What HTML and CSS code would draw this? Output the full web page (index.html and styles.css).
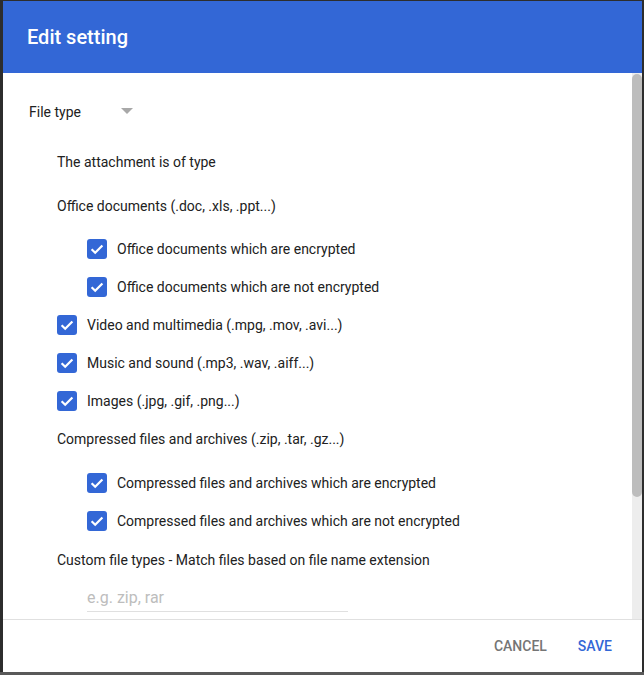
FILE: index.html
```html
<!DOCTYPE html>
<html>
<head>
<meta charset="utf-8">
<link rel="stylesheet" href="styles.css">
</head>
<body>
<div class="dialog">
  <header class="dlg-header"><h1 class="dlg-title">Edit setting</h1></header>
  <div class="dlg-body">
  <div class="dlg-content">
    <div class="select-row">
      <span class="select-label">File type</span>
      <span class="select-arrow"></span>
    </div>
    <div class="block">
      <div class="heading h-first">The attachment is of type</div>
      <div class="heading h-office">Office documents (.doc, .xls, .ppt...)</div>
      <div class="group">
        <label class="cb-row nested"><span class="cb"><svg viewBox="0 0 20 20"><path d="M4.6 10.2l3.6 3.6 7.2-7.4"/></svg></span><span class="cb-text">Office documents which are encrypted</span></label>
        <label class="cb-row nested"><span class="cb"><svg viewBox="0 0 20 20"><path d="M4.6 10.2l3.6 3.6 7.2-7.4"/></svg></span><span class="cb-text">Office documents which are not encrypted</span></label>
        <label class="cb-row"><span class="cb"><svg viewBox="0 0 20 20"><path d="M4.6 10.2l3.6 3.6 7.2-7.4"/></svg></span><span class="cb-text">Video and multimedia (.mpg, .mov, .avi...)</span></label>
        <label class="cb-row"><span class="cb"><svg viewBox="0 0 20 20"><path d="M4.6 10.2l3.6 3.6 7.2-7.4"/></svg></span><span class="cb-text">Music and sound (.mp3, .wav, .aiff...)</span></label>
        <label class="cb-row"><span class="cb"><svg viewBox="0 0 20 20"><path d="M4.6 10.2l3.6 3.6 7.2-7.4"/></svg></span><span class="cb-text">Images (.jpg, .gif, .png...)</span></label>
      </div>
      <div class="heading h-comp">Compressed files and archives (.zip, .tar, .gz...)</div>
      <div class="group">
        <label class="cb-row nested"><span class="cb"><svg viewBox="0 0 20 20"><path d="M4.6 10.2l3.6 3.6 7.2-7.4"/></svg></span><span class="cb-text">Compressed files and archives which are encrypted</span></label>
        <label class="cb-row nested"><span class="cb"><svg viewBox="0 0 20 20"><path d="M4.6 10.2l3.6 3.6 7.2-7.4"/></svg></span><span class="cb-text">Compressed files and archives which are not encrypted</span></label>
      </div>
      <div class="heading h-custom">Custom file types - Match files based on file name extension</div>
      <div class="input-wrap"><input class="text-input" type="text" placeholder="e.g. zip, rar"></div>
    </div>
  </div>
  <div class="scrollbar"><div class="scroll-thumb"></div></div>
  </div>
  <footer class="dlg-footer">
    <button class="btn btn-cancel">CANCEL</button>
    <button class="btn btn-save">SAVE</button>
  </footer>
</div>
<div class="bottom-strip"></div>
</body>
</html>
```
FILE: styles.css
```css
html, body {
  margin: 0;
  padding: 0;
  background: #2d2d2d;
  height: 675px;
  overflow: hidden;
}
body {
  font-family: Roboto, "Liberation Sans", Arial, sans-serif;
  color: #212121;
  font-size: 14px;
}
.dialog {
  margin: 1px 0 0 3px;
  width: 639px;
  height: 671px;
  background: #fff;
  display: flex;
  flex-direction: column;
}
.bottom-strip {
  height: 3px;
  background: #595959;
}
.dlg-header {
  height: 72px;
  flex: none;
  background: #3367d6;
  display: flex;
  align-items: center;
  padding-left: 24px;
  box-sizing: border-box;
}
.dlg-title {
  margin: 0;
  font-size: 20px;
  font-weight: 500;
  color: #fff;
  line-height: 24px;
  padding-bottom: 1px;
}
.dlg-body {
  flex: 1;
  display: flex;
  min-height: 0;
}
.dlg-content {
  flex: 1;
  overflow: hidden;
  padding: 29px 0 0 26px;
  box-sizing: border-box;
}
.scrollbar {
  width: 10px;
  flex: none;
  background: #ededed;
  padding-top: 1px;
}
.scroll-thumb {
  height: 423px;
  background: #bdbdbd;
  border-radius: 5px;
}
.select-row {
  display: flex;
  align-items: center;
  height: 20px;
}
.select-label {
  width: 92px;
  line-height: 20px;
}
.select-arrow {
  width: 0;
  height: 0;
  border-left: 6px solid transparent;
  border-right: 6px solid transparent;
  border-top: 6px solid #a8a8a8;
  margin-top: -2px;
}
.block {
  padding-left: 28px;
}
.heading {
  line-height: 20px;
  height: 20px;
}
.h-first { margin-top: 30px; }
.h-office { margin-top: 24px; margin-bottom: 14px; }
.h-comp { margin-top: 9px; margin-bottom: 15px; }
.h-custom { margin-top: 10px; }
.cb-row {
  display: flex;
  align-items: center;
  height: 38px;
}
.cb-row.nested {
  padding-left: 30px;
}
.cb {
  width: 20px;
  height: 20px;
  border-radius: 3px;
  background: #3367d6;
  flex: none;
  display: flex;
}
.cb svg {
  width: 20px;
  height: 20px;
}
.cb svg path {
  fill: none;
  stroke: #fff;
  stroke-width: 2.2;
}
.cb-text {
  margin-left: 10px;
  line-height: 20px;
}
.input-wrap {
  margin-top: 17px;
  padding-left: 30px;
}
.text-input {
  display: block;
  width: 261px;
  height: 25px;
  border: none;
  border-bottom: 1px solid #e0e0e0;
  outline: none;
  padding: 0;
  font-family: Roboto, "Liberation Sans", Arial, sans-serif;
  font-size: 16px;
  color: #212121;
  box-sizing: border-box;
  padding-bottom: 3px;
}
.text-input::placeholder {
  color: #bdbdbd;
}
.dlg-footer {
  flex: none;
  height: 53px;
  border-top: 1px solid #e0e0e0;
  box-sizing: border-box;
  display: flex;
  align-items: center;
  justify-content: flex-end;
  padding-right: 22px;
  gap: 15px;
}
.btn {
  background: none;
  border: none;
  font-family: Roboto, "Liberation Sans", Arial, sans-serif;
  font-size: 14px;
  font-weight: 500;
  padding: 6px 8px;
  line-height: 20px;
  cursor: pointer;
}
.btn-cancel { color: #757575; }
.btn-save { color: #3367d6; }
```
